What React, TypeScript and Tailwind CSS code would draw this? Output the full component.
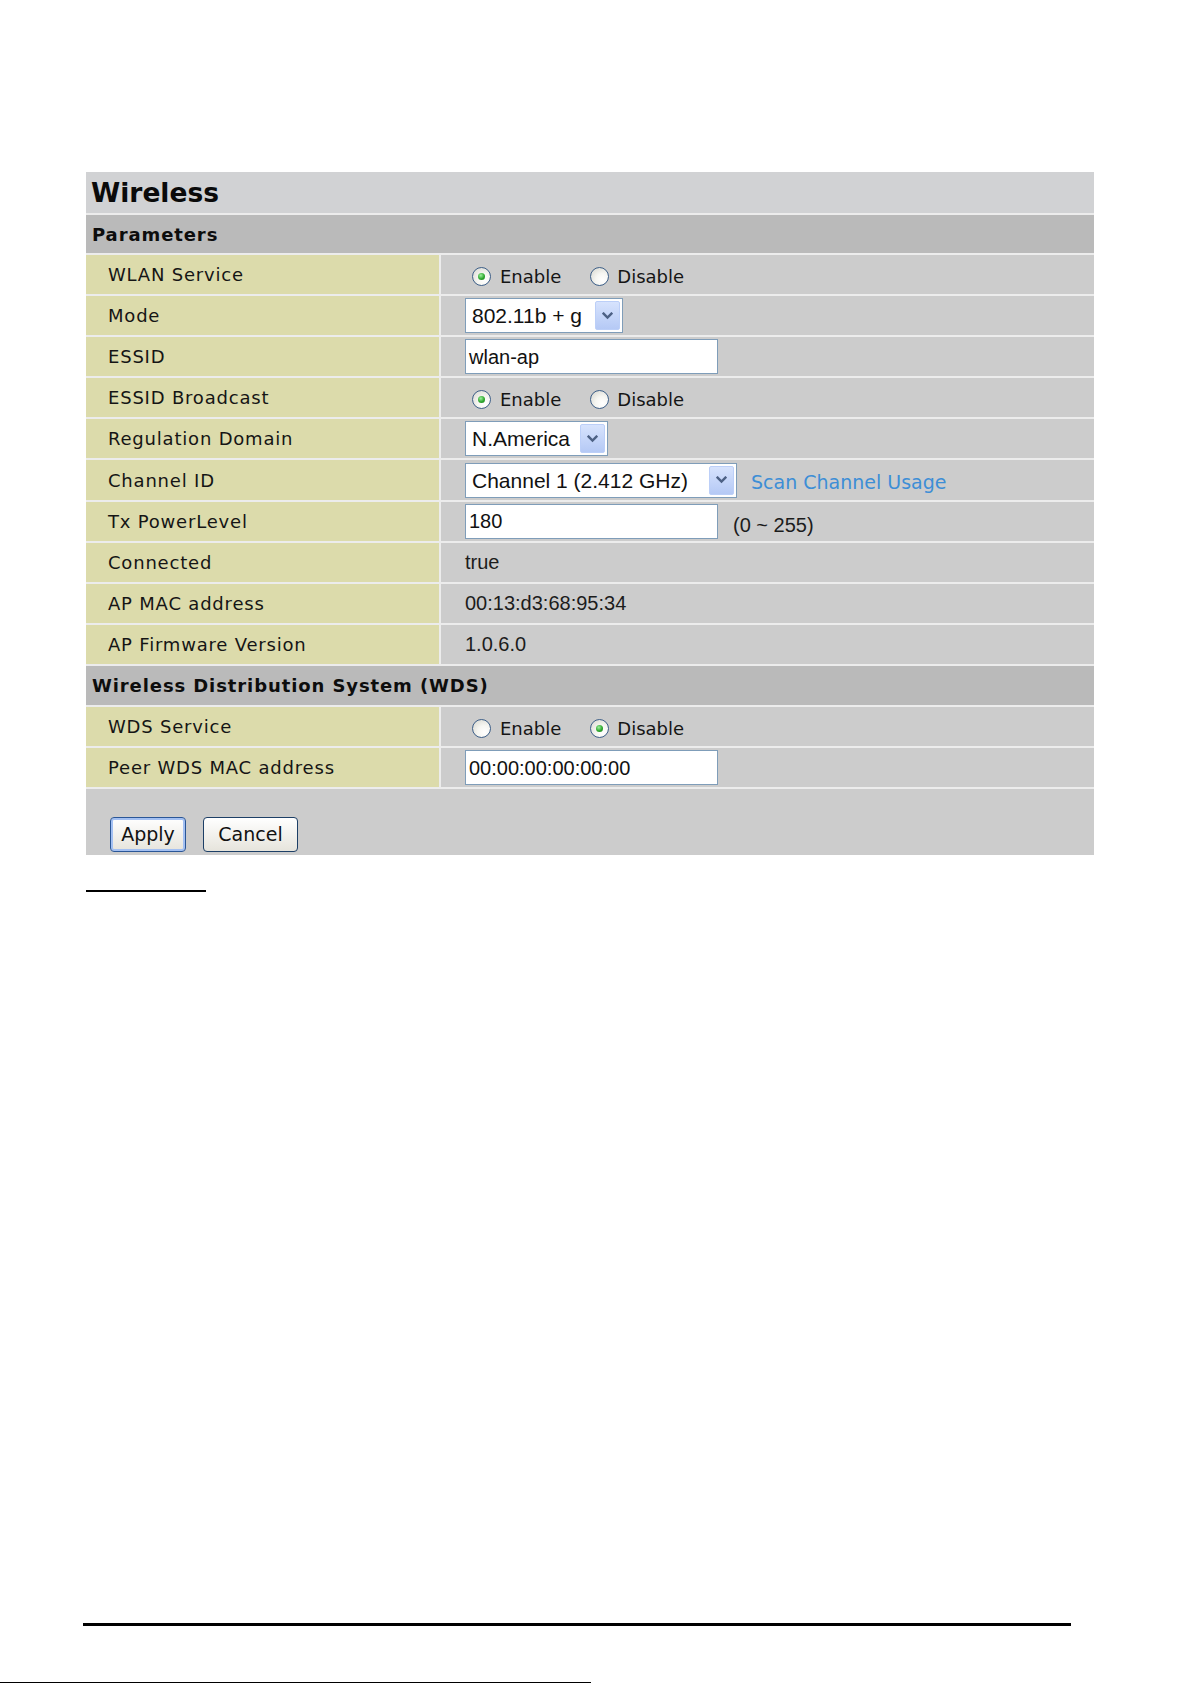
import React from "react";

const LBL = "font-['DejaVu_Sans',sans-serif] text-[18px] tracking-[0.8px] text-[#151515]";
const VAL = "font-['Liberation_Sans',Arial,sans-serif] text-[20px] text-[#1c1c1c]";
const HDR = "font-['DejaVu_Sans',sans-serif] font-bold text-[18px] tracking-[0.9px] text-[#0d0d0d]";

const Chevron = () => (
  <svg width="11" height="8" viewBox="0 0 11 8">
    <path d="M1.6 1.6 L5.5 5.5 L9.4 1.6" stroke="#4d6185" strokeWidth="2.4" fill="none" strokeLinecap="square" />
  </svg>
);

const Radio = ({ checked, cls }: { checked?: boolean; cls?: string }) => (
  <span
    className={
      "flex h-[19px] w-[19px] shrink-0 items-center justify-center rounded-full border border-[#3d5f88] bg-[radial-gradient(circle_at_68%_72%,#ffffff_0%,#f6f6f2_40%,#d4d4cc_100%)] " +
      (cls ?? "")
    }
  >
    {checked && (
      <span className="h-[7px] w-[7px] rounded-full bg-[radial-gradient(circle_at_40%_35%,#9ef09e_0%,#2fa82f_55%,#1a7a1a_100%)]" />
    )}
  </span>
);

const RadioPair = ({ first }: { first: boolean }) => (
  <div className="ml-[7px] mt-[4px] flex items-center font-['DejaVu_Sans',sans-serif] text-[18px] text-[#151515]">
    <Radio checked={first} />
    <span className="ml-[9px]">Enable</span>
    <Radio checked={!first} cls="ml-[29px]" />
    <span className="ml-[8px]">Disable</span>
  </div>
);

const Select = ({ cls, text }: { cls: string; text: string }) => (
  <div className={"flex h-[35px] items-center justify-between border border-[#7f9db9] bg-white pl-[6px] pr-[2px] " + cls}>
    <span className="font-['Liberation_Sans',Arial,sans-serif] text-[21px] leading-none text-[#111]">{text}</span>
    <span className="flex h-[29px] w-[25px] items-center justify-center rounded-[2px] border border-[#bccff8] bg-gradient-to-b from-[#d7e3fd] to-[#b5c9f5]">
      <Chevron />
    </span>
  </div>
);

const Input = ({ text }: { text: string }) => (
  <div className="flex h-[35px] w-[253px] items-center border border-[#7f9db9] bg-white pl-[3px]">
    <span className="font-['Liberation_Sans',Arial,sans-serif] text-[20px] leading-none text-[#111]">{text}</span>
  </div>
);

const Row = ({ label, children }: { label: string; children: React.ReactNode }) => (
  <div className="flex h-[39.1px] gap-[2px]">
    <div className={"flex w-[353px] shrink-0 items-center bg-[#dcdbab] pl-[22px] " + LBL}>{label}</div>
    <div className="flex flex-1 items-center bg-[#cccccc] pl-[24px]">{children}</div>
  </div>
);

const Header = ({ text }: { text: string }) => (
  <div className={"flex h-[39.1px] items-center bg-[#bababa] pl-[6px] " + HDR}>{text}</div>
);

export default function App() {
  return (
    <div className="flex h-[1685px] w-[1191px] flex-col overflow-hidden bg-white">
      <div className="ml-[86px] mt-[172px] flex w-[1008px] flex-col gap-[2px] bg-[#ececec]">
        <div className="flex h-[41px] items-center bg-[#d1d2d4] pl-[5px] pt-[1px] font-['DejaVu_Sans',sans-serif] text-[26.5px] font-bold text-[#0a0a0a]">
          Wireless
        </div>
        <div className={"flex h-[38px] items-center bg-[#bababa] pl-[6px] " + HDR}>Parameters</div>
        <Row label="WLAN Service">
          <RadioPair first={true} />
        </Row>
        <Row label="Mode">
          <Select cls="w-[158px]" text="802.11b + g" />
        </Row>
        <Row label="ESSID">
          <Input text="wlan-ap" />
        </Row>
        <Row label="ESSID Broadcast">
          <RadioPair first={true} />
        </Row>
        <Row label="Regulation Domain">
          <Select cls="w-[143px]" text="N.America" />
        </Row>
        <Row label="Channel ID">
          <Select cls="w-[272px]" text="Channel 1 (2.412 GHz)" />
          <span className="ml-[14px] mt-[4px] font-['DejaVu_Sans',sans-serif] text-[19px] text-[#3d8ed6]">
            Scan Channel Usage
          </span>
        </Row>
        <Row label="Tx PowerLevel">
          <Input text="180" />
          <span className={"ml-[15px] mt-[7px] " + VAL}>(0 ~ 255)</span>
        </Row>
        <Row label="Connected">
          <span className={VAL}>true</span>
        </Row>
        <Row label="AP MAC address">
          <span className={VAL}>00:13:d3:68:95:34</span>
        </Row>
        <Row label="AP Firmware Version">
          <span className={VAL}>1.0.6.0</span>
        </Row>
        <Header text="Wireless Distribution System (WDS)" />
        <Row label="WDS Service">
          <RadioPair first={false} />
        </Row>
        <Row label="Peer WDS MAC address">
          <Input text="00:00:00:00:00:00" />
        </Row>
        <div className="flex h-[66px] items-start gap-[17px] bg-[#cccccc] pl-[24px] pt-[28px]">
          <button className="flex h-[35px] w-[76px] items-center justify-center rounded-[4px] border border-[#2a5697] bg-gradient-to-b from-white to-[#e6e4dc] font-['DejaVu_Sans',sans-serif] text-[19px] text-[#111] shadow-[inset_0_0_0_2px_#a3c0f2]">
            Apply
          </button>
          <button className="flex h-[35px] w-[95px] items-center justify-center rounded-[4px] border border-[#1d3f66] bg-gradient-to-b from-white to-[#e6e4dc] font-['DejaVu_Sans',sans-serif] text-[19px] text-[#111]">
            Cancel
          </button>
        </div>
      </div>
      <div className="ml-[86px] mt-[35px] h-[2px] w-[120px] bg-black" />
      <div className="ml-[83px] mt-[731px] h-[3px] w-[988px] bg-black" />
      <div className="mt-[56px] h-[1px] w-[591px] bg-black" />
    </div>
  );
}
